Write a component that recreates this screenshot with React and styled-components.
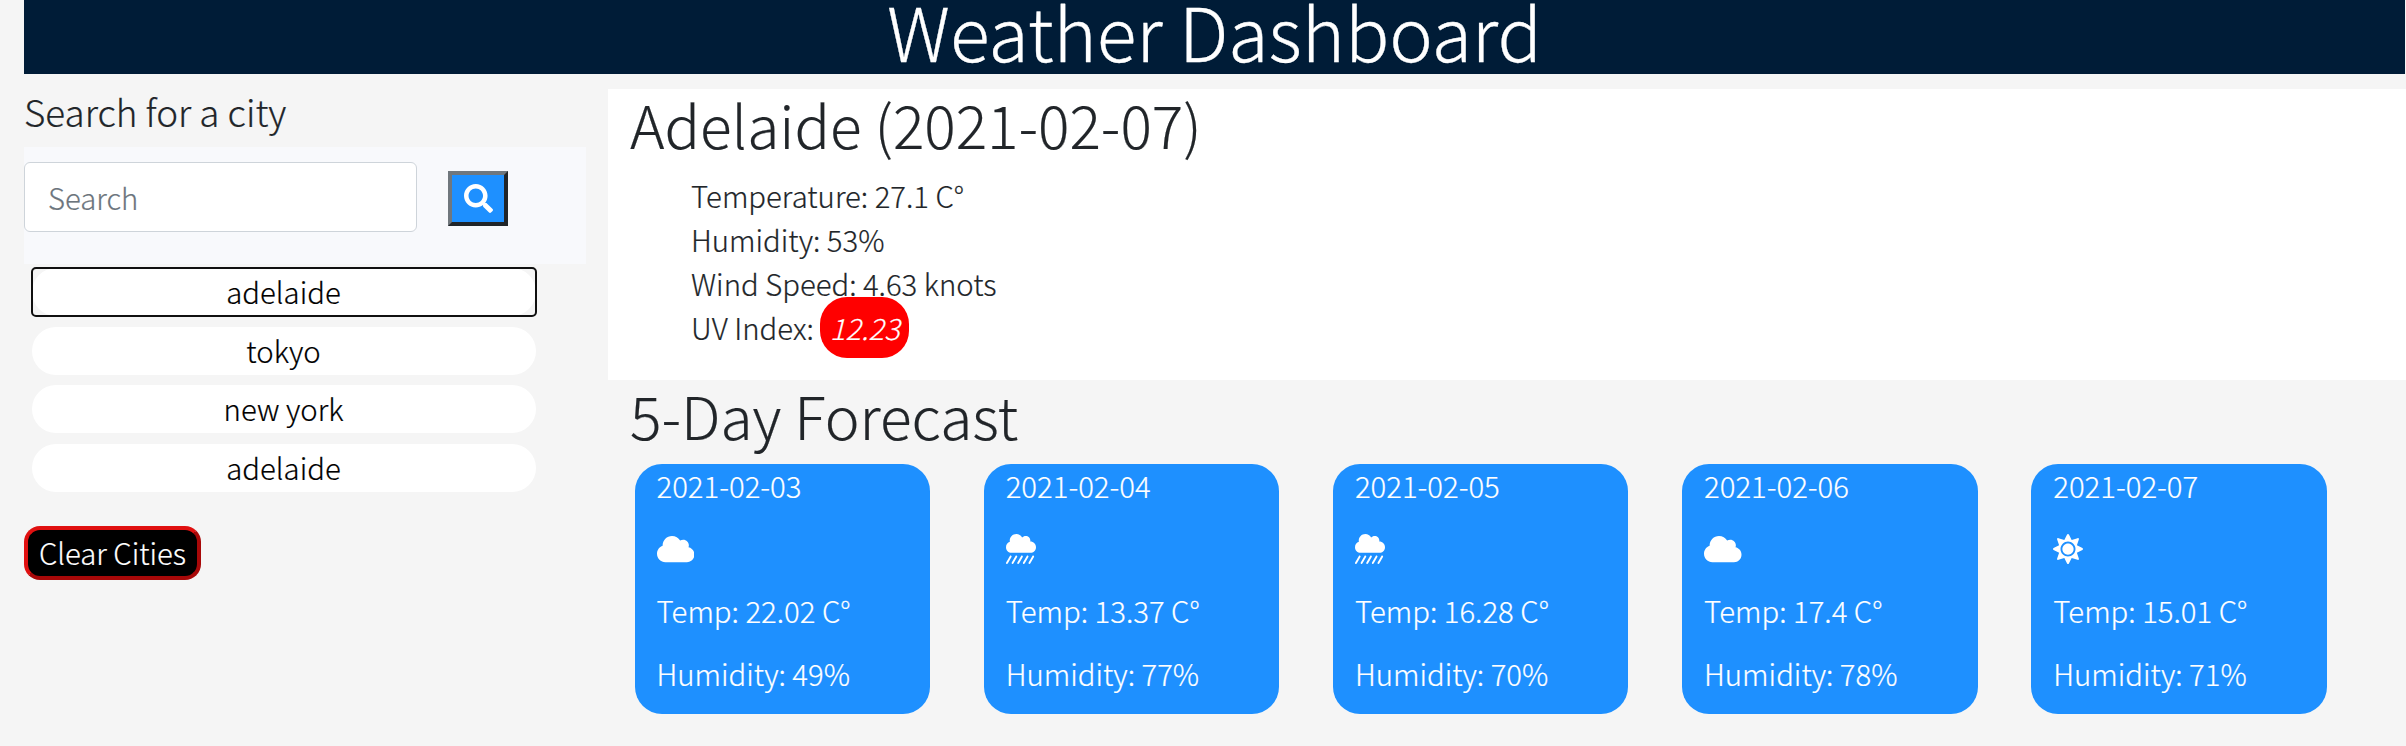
import React from "react";
import styled, { createGlobalStyle } from "styled-components";
import { FaCloud, FaCloudShowersHeavy, FaSearch, FaSun } from "react-icons/fa";

const GlobalStyle = createGlobalStyle`
  * { box-sizing: border-box; }
  body {
    margin: 0;
    min-height: 746px;
    background: #f5f5f5;
    color: #212529;
    font-family: "Noto Sans CJK SC", "Open Sans", sans-serif;
    font-weight: 300;
    font-size: 29.3px;
    -webkit-text-stroke: 0.2px currentColor;
    overflow: hidden;
  }
  h1, h2, h3, p, ul { margin: 0; padding: 0; font-weight: 300; }
  button, input { font: inherit; }
`;

const Header = styled.header`
  height: 74px;
  margin: 0 1px 0 24px;
  background: #001c37;
  color: #fff;
  text-align: center;
`;

const Title = styled.h1`
  font-size: 73.5px;
  line-height: 60px;
  white-space: nowrap;
  -webkit-text-stroke: 0.3px currentColor;
`;

const Page = styled.div`
  display: flex;
`;

const Sidebar = styled.aside`
  width: 608px;
  padding: 13px 22px 0 24px;
`;

const SidebarTitle = styled.h3`
  font-size: 36.8px;
  line-height: 48px;
  margin-bottom: 12px;
`;

const SearchForm = styled.form`
  display: flex;
  align-items: flex-start;
  height: 117px;
  padding-top: 15px;
  background: #f8f9fc;
`;

const SearchInput = styled.input`
  width: 393px;
  height: 70px;
  padding: 0 23px 1px;
  border: 1.5px solid #ced4da;
  border-radius: 6px;
  background: #fff;
  outline: none;
  &::placeholder { color: #6c757d; opacity: 1; }
`;

const SearchButton = styled.button`
  display: flex;
  align-items: center;
  justify-content: center;
  width: 60px;
  height: 55px;
  margin: 9px 0 0 31px;
  padding: 0;
  border: 4px solid;
  border-color: #70777d #212529 #212529 #70777d;
  background: #1e90ff;
  color: #fff;
  font-size: 29px;
`;

const CityList = styled.div`
  display: flex;
  flex-direction: column;
  gap: 10.6px;
  padding: 4px 0 0 7.5px;
`;

const FocusRing = styled.div`
  display: flex;
  width: 504px;
  height: 48px;
  border-radius: 4px;
  outline: ${(p) => (p.$on ? "2.5px solid #101010" : "none")};
  outline-offset: -1px;
`;

const CityButton = styled.button`
  width: 504px;
  height: 48px;
  padding: 0 0 2px;
  border: 0;
  border-radius: 24px;
  background: #fff;
  color: #000;
  line-height: 44px;
`;

const ClearButton = styled.button`
  width: 177px;
  height: 54px;
  margin-top: 34px;
  padding: 0 0 2px;
  border: 4px solid;
  border-color: #e01010 #a80808 #a80808 #e01010;
  border-radius: 16px;
  background: #000;
  color: #fff;
  line-height: 42px;
  white-space: nowrap;
`;

const Main = styled.main`
  flex: 1;
  padding-top: 15px;
`;

const Current = styled.section`
  height: 291px;
  padding-left: 22px;
  background: #fff;
`;

const SectionTitle = styled.h2`
  font-size: 58.7px;
  line-height: 70px;
  white-space: nowrap;
`;

const Readings = styled.ul`
  margin-top: 14px;
  padding-left: 61px;
  list-style: none;
  line-height: 44px;
`;

const Reading = styled.li`
  height: 44px;
  white-space: nowrap;
`;

const UvBadge = styled.i`
  display: inline-block;
  height: 61px;
  width: 89px;
  margin: -9px 0;
  border-radius: 27px;
  background: #f00;
  color: #fff;
  line-height: 60px;
  text-align: center;
`;

const Forecast = styled.section`
  padding-left: 22px;
`;

const Cards = styled.div`
  display: flex;
  gap: 53.7px;
  margin: 14px 0 0 4.5px;
`;

const Card = styled.article`
  flex: none;
  display: flex;
  flex-direction: column;
  gap: 18.7px;
  width: 295.5px;
  height: 250px;
  padding-left: 22px;
  border-radius: 27px;
  background: #1e90ff;
  color: #fff;
`;

const CardLine = styled.p`
  height: 44px;
  line-height: 43px;
  white-space: nowrap;
`;

const IconLine = styled.div`
  display: flex;
  align-items: center;
  height: 44px;

  svg {
    flex: none;
    width: ${(p) => (p.$wide ? "37.5px" : "30px")};
    height: 30px;
  }
`;

const CITIES = ["adelaide", "tokyo", "new york", "adelaide"];

const DAYS = [
  { date: "2021-02-03", Icon: FaCloud, temp: "22.02", humidity: 49 },
  { date: "2021-02-04", Icon: FaCloudShowersHeavy, temp: "13.37", humidity: 77 },
  { date: "2021-02-05", Icon: FaCloudShowersHeavy, temp: "16.28", humidity: 70 },
  { date: "2021-02-06", Icon: FaCloud, temp: "17.4", humidity: 78 },
  { date: "2021-02-07", Icon: FaSun, temp: "15.01", humidity: 71 },
];

export default function App() {
  return (
    <>
      <GlobalStyle />
      <Header>
        <Title>Weather Dashboard</Title>
      </Header>
      <Page>
        <Sidebar>
          <SidebarTitle>Search for a city</SidebarTitle>
          <SearchForm>
            <SearchInput placeholder="Search" />
            <SearchButton type="button" aria-label="Search">
              <FaSearch />
            </SearchButton>
          </SearchForm>
          <CityList>
            {CITIES.map((city, i) => (
              <FocusRing key={i} $on={i === 0}>
                <CityButton>{city}</CityButton>
              </FocusRing>
            ))}
          </CityList>
          <ClearButton>Clear Cities</ClearButton>
        </Sidebar>
        <Main>
          <Current>
            <SectionTitle>Adelaide (2021-02-07)</SectionTitle>
            <Readings>
              <Reading>Temperature: 27.1 C°</Reading>
              <Reading>Humidity: 53%</Reading>
              <Reading>Wind Speed: 4.63 knots</Reading>
              <Reading>
                UV Index: <UvBadge>12.23</UvBadge>
              </Reading>
            </Readings>
          </Current>
          <Forecast>
            <SectionTitle>5-Day Forecast</SectionTitle>
            <Cards>
              {DAYS.map(({ date, Icon, temp, humidity }) => (
                <Card key={date}>
                  <CardLine>{date}</CardLine>
                  <IconLine $wide={Icon === FaCloud}>
                    <Icon />
                  </IconLine>
                  <CardLine>Temp: {temp} C°</CardLine>
                  <CardLine>Humidity: {humidity}%</CardLine>
                </Card>
              ))}
            </Cards>
          </Forecast>
        </Main>
      </Page>
    </>
  );
}
